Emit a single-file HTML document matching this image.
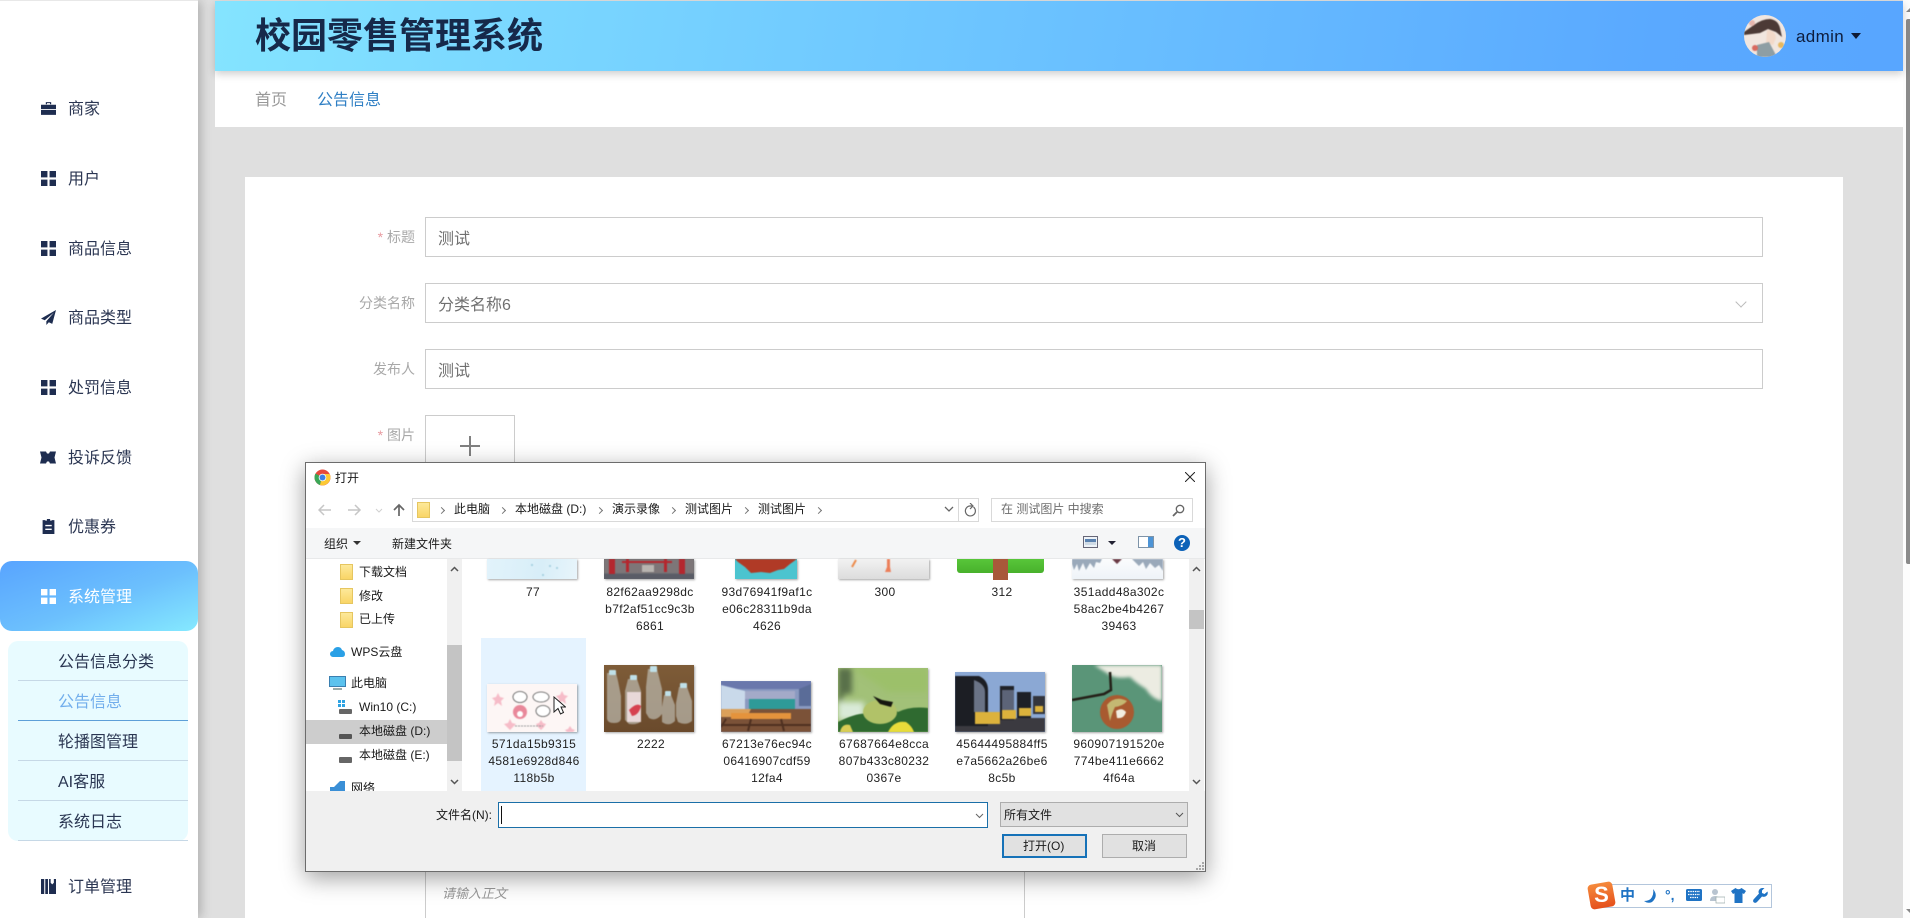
<!DOCTYPE html>
<html lang="zh"><head><meta charset="utf-8"><title>校园零售管理系统</title>
<style>
html,body{margin:0;padding:0;width:1910px;height:918px;overflow:hidden;background:#dfdfdf}
body{position:relative;font-family:"Liberation Sans","Noto Sans CJK SC",sans-serif}
div,span,svg{position:absolute;box-sizing:border-box}
.t{white-space:nowrap}
.m{left:68px;font-size:16px;line-height:24px;color:#2b3652}
.ic{left:40.500px;width:15px;height:15px}
.s{left:58px;font-size:16px;line-height:24px;color:#2a3652}
.sep{left:18px;width:170px;height:1px;background:#c6d8e6}
.lb{font-size:14px;line-height:20px;color:#a8a8a8;text-align:right;right:1495px}
.lb i{font-style:normal;color:#e89aa0}
.inp{left:425px;width:1338px;height:40px;background:#fff;border:1px solid #ccc}
.inp span{left:12px;top:11px;font-size:16px;line-height:22px;color:#707070;white-space:nowrap}
.d{font-size:12px;line-height:17px;color:#1a1a1a;white-space:nowrap}
.ch{width:5px;height:5px;border-top:1px solid #777;border-right:1px solid #777;transform:rotate(45deg);top:508px}
.f{text-align:center;font-size:12px;line-height:17px;color:#222;letter-spacing:.35px;width:112px;white-space:nowrap}
.th{overflow:hidden;box-shadow:1px 1px 2px rgba(0,0,0,.35)}
.th svg{left:0;top:0;filter:blur(.5px)}
.fold{width:13px;height:16px;background:linear-gradient(#fde99a,#f9d566);border:1px solid #e6c660}
</style></head><body>

<!-- sidebar -->
<div style="left:0;top:1px;width:198px;height:917px;background:#fff;box-shadow:3px 0 10px rgba(0,0,0,.22)"></div>
<div style="left:0;top:0;width:198px;height:1px;background:#e8e8e8"></div>

<svg class="ic" style="top:101px" viewBox="0 0 14 14" fill="#1e2d50"><path d="M4.500 3V1h5v2H8.400V2H5.600v1zM0 3.500h14v4H0zM0 8.300h14V13H0z"/></svg>
<div class="t m" style="top:98px">商家</div>
<svg class="ic" style="top:171px" viewBox="0 0 14 14" fill="#1e2d50"><path d="M0 0h6v6H0zM8 0h6v6H8zM0 8h6v6H0zM8 8h6v6H8z"/></svg>
<div class="t m" style="top:168px">用户</div>
<svg class="ic" style="top:241px" viewBox="0 0 14 14" fill="#1e2d50"><path d="M0 0h6v6H0zM8 0h6v6H8zM0 8h6v6H0zM8 8h6v6H8z"/></svg>
<div class="t m" style="top:238px">商品信息</div>
<svg class="ic" style="top:310px" viewBox="0 0 14 14" fill="#1e2d50"><path d="M14 0 0 8l3.500 1.600L12 2.500 5 10.500V14l2.300-2.600 3.200 1.500z"/></svg>
<div class="t m" style="top:307px">商品类型</div>
<svg class="ic" style="top:380px" viewBox="0 0 14 14" fill="#1e2d50"><path d="M0 0h6v6H0zM8 0h6v6H8zM0 8h6v6H0zM8 8h6v6H8z"/></svg>
<div class="t m" style="top:377px">处罚信息</div>
<svg class="ic" style="top:450px;left:40px;width:16px" viewBox="0 0 16 14" fill="#1e2d50"><path d="M0 1h6l1 2h2l1-2h6l-1.500 6L16 13h-6l-1-2H7l-1 2H0l1.500-6z"/></svg>
<div class="t m" style="top:447px">投诉反馈</div>
<svg class="ic" style="top:519px" viewBox="0 0 14 14" fill="#1e2d50"><path fill-rule="evenodd" d="M4 1.500h1.500V0h3v1.500H10V1h2.500v13h-11V1H4zM4 5.500v1.300h6V5.500zM4 9v1.300h6V9z"/></svg>
<div class="t m" style="top:516px">优惠券</div>

<div style="left:0;top:561px;width:198px;height:70px;border-radius:12px;background:linear-gradient(160deg,#58a4ff 0%,#6cc0fd 55%,#85e9ff 100%)"></div>
<svg class="ic" style="top:589px" viewBox="0 0 14 14" fill="#fff"><path d="M0 0h6v6H0zM8 0h6v6H8zM0 8h6v6H0zM8 8h6v6H8z"/></svg>
<div class="t m" style="top:586px;color:#fff">系统管理</div>

<div style="left:8px;top:641px;width:180px;height:200px;background:#e8fbff;border-radius:10px"></div>
<div class="t s" style="top:651px">公告信息分类</div>
<div class="sep" style="top:680px"></div>
<div class="t s" style="top:691px;color:#72aeec">公告信息</div>
<div class="sep" style="top:720px;background:#5d9fd8"></div>
<div class="t s" style="top:731px">轮播图管理</div>
<div class="sep" style="top:760px"></div>
<div class="t s" style="top:771px">AI客服</div>
<div class="sep" style="top:800px"></div>
<div class="t s" style="top:811px">系统日志</div>
<div class="sep" style="top:840px"></div>

<svg class="ic" style="top:879px" viewBox="0 0 14 14" fill="#1e2d50"><path d="M0 0h3v14H0zM4 0h2.500v14H4zM7.500 0H9v3.500L10.500 5 12 3.500V0h2v14H7.500z"/></svg>
<div class="t m" style="top:876px">订单管理</div>

<!-- header -->
<div style="left:215px;top:1px;width:1688px;height:70px;background:linear-gradient(100deg,#84e4ff 0%,#6fc8ff 40%,#5aa9ff 85%,#58a6ff 100%);box-shadow:0 3px 8px rgba(0,0,0,.2);z-index:2"></div>
<div class="t" style="left:255px;top:11px;font-size:36px;line-height:50px;font-weight:bold;color:#16294a;z-index:3">校园零售管理系统</div>
<div style="left:1744px;top:15px;width:42px;height:42px;border-radius:50%;overflow:hidden;background:#f1e6df;z-index:3">
<svg width="42" height="42" viewBox="0 0 42 42" style="filter:blur(.6px)"><path d="M0 17 10 10q8-6 16-6 8 1 10 9l2 9-6-5-8-3-8 4-16 2z" fill="#4c3a36"/><path d="M23 15q8 0 9 8l-3 7-7-2z" fill="#f2d9c9"/><path d="M13 30l12-3 8 15H13z" fill="#8e9ea4"/><circle cx="11" cy="33" r="3" fill="#d96a60"/><circle cx="37" cy="30" r="3" fill="#e7b85f"/><circle cx="8" cy="8" r="3" fill="#e6b6ae"/></svg></div>
<div class="t" style="left:1796px;top:25px;font-size:17px;letter-spacing:.35px;line-height:24px;color:#0e1d3d;z-index:3">admin</div>
<div style="left:1851px;top:33px;width:0;height:0;border-left:5px solid transparent;border-right:5px solid transparent;border-top:6px solid #0e1a35;z-index:3"></div>

<!-- sub nav -->
<div style="left:215px;top:71px;width:1688px;height:56px;background:#fff"></div>
<div class="t" style="left:255px;top:89px;font-size:16px;line-height:24px;color:#999">首页</div>
<div class="t" style="left:317px;top:89px;font-size:16px;line-height:24px;color:#2f7fc4">公告信息</div>

<!-- page scrollbar -->
<div style="left:1903px;top:0;width:7px;height:918px;background:#fdfdfd"></div>
<div style="left:1906px;top:19px;width:4px;height:545px;background:#8b8b8b;border-radius:2px 0 0 2px"></div>
<div style="left:1906px;top:8px;width:0;height:0;border-left:4px solid transparent;border-bottom:4px solid #888"></div>
<div style="left:1906px;top:909px;width:0;height:0;border-left:4px solid transparent;border-top:4px solid #888"></div>

<!-- card -->
<div style="left:245px;top:177px;width:1598px;height:741px;background:#fff"></div>
<div class="t lb" style="top:227px"><i>*</i> 标题</div>
<div class="inp" style="top:217px"><span>测试</span></div>
<div class="t lb" style="top:293px">分类名称</div>
<div class="inp" style="top:283px"><span>分类名称6</span></div>
<div style="left:1737px;top:298px;width:8px;height:8px;border-right:1px solid #bbb;border-bottom:1px solid #bbb;transform:rotate(45deg)"></div>
<div class="t lb" style="top:359px">发布人</div>
<div class="inp" style="top:349px"><span>测试</span></div>
<div class="t lb" style="top:425px"><i>*</i> 图片</div>
<div style="left:425px;top:415px;width:90px;height:90px;border:1px solid #ccc"></div>
<div style="left:460px;top:445px;width:20px;height:2px;background:#808080"></div>
<div style="left:469px;top:436px;width:2px;height:20px;background:#808080"></div>
<div style="left:425px;top:860px;width:600px;height:58px;border:1px solid #ccc;border-bottom:none"></div>
<div class="t" style="left:442px;top:884px;font-size:13px;line-height:20px;font-style:italic;color:#999">请输入正文</div>

<!-- sogou -->
<div style="left:1600px;top:884px;width:172px;height:24px;background:#fff;border:1px solid #b3c6dc"></div>
<div style="left:1589px;top:883px;width:25px;height:25px;border-radius:4px;background:linear-gradient(#f58a3c,#e5501c);transform:rotate(-10deg)"></div>
<div class="t" style="left:1591px;top:881px;width:21px;text-align:center;font-size:22px;line-height:28px;font-weight:bold;color:#fff">S</div>
<div class="t" style="left:1620px;top:886px;font-size:15px;line-height:20px;font-weight:bold;color:#1f73c4">中</div>
<svg style="left:1643px;top:888px" width="16" height="16" viewBox="0 0 16 16"><path d="M10 1q6 7-1 13-4 2-8-1 6 0 8-4 2-4 1-8z" fill="#1f73c4"/></svg>
<div class="t" style="left:1665px;top:885px;font-size:14px;line-height:20px;font-weight:bold;color:#1f73c4">°,</div>
<svg style="left:1686px;top:889px" width="16" height="13" viewBox="0 0 16 13"><rect width="16" height="12" rx="1.500" fill="#1f73c4"/><path d="M2 2.500h12M2 5.500h12M4 8.500h8" stroke="#fff" stroke-width="1.300" stroke-dasharray="1.500 .8"/></svg>
<svg style="left:1709px;top:888px" width="16" height="16" viewBox="0 0 16 16"><circle cx="6" cy="4" r="3" fill="#b8c4d0"/><path d="M1 13q0-5 5-5t5 5z" fill="#b8c4d0"/><rect x="7" y="9" width="9" height="6" fill="#fff" stroke="#9aa" stroke-width=".7"/></svg>
<svg style="left:1731px;top:888px" width="15" height="15" viewBox="0 0 15 15"><path d="M4.500 0 0 3l2 3 1.500-.7V15h8V5.300L13 6l2-3-4.500-3q-3 2.500-6 0z" fill="#1f73c4"/></svg>
<svg style="left:1753px;top:888px" width="15" height="15" viewBox="0 0 15 15"><path d="M14.500 3.500 11.500 6 9 5 9 2.500 11.500 0Q7.500-.5 6 2q-1 2 0 3.500L.5 11.500q-1 2 .5 3 1.500 1 3-.5L9 8.500q3 1 4.800-1 1.500-1.800.7-4z" fill="#1f73c4"/></svg>

<!-- dialog -->
<div style="left:305px;top:462px;width:901px;height:410px;background:#fff;border:1px solid #6c6c6c;box-shadow:0 6px 22px rgba(0,0,0,.38);z-index:5;overflow:hidden">
</div>
<div id="dlg" style="left:0;top:0;width:1910px;height:918px;z-index:6">
  <!-- title -->
  <svg style="left:314px;top:469px" width="17" height="17" viewBox="0 0 17 17"><circle cx="8.500" cy="8.500" r="8" fill="#e6493c"/><path d="M8.500 8.500 1.500 4.500A8 8 0 0 0 6 16z" fill="#3aa757"/><path d="M8.500 5h7.200A8 8 0 0 1 6 16z" fill="#fcc934"/><circle cx="8.500" cy="8.500" r="3.800" fill="#fff"/><circle cx="8.500" cy="8.500" r="3" fill="#3d7fe6"/></svg>
  <div class="t d" style="left:335px;top:470px">打开</div>
  <svg style="left:1185px;top:472px" width="10" height="10" viewBox="0 0 10 10"><path d="M0 0l10 10M10 0 0 10" stroke="#222" stroke-width="1"/></svg>

  <!-- nav -->
  <svg style="left:318px;top:503px" width="90" height="14" viewBox="0 0 90 14" fill="none"><path d="M1 7h12M6 2 1 7l5 5" stroke="#c6c6c6" stroke-width="1.500"/><path d="M30 7h12M37 2l5 5-5 5" stroke="#c6c6c6" stroke-width="1.500"/><path d="M58 6l3 3 3-3" stroke="#d0d0d0"/><path d="M81 13V2M76 7l5-5 5 5" stroke="#666" stroke-width="1.700"/></svg>
  <div style="left:412px;top:498px;width:567px;height:24px;border:1px solid #d9d9d9;background:#fff"></div>
  <div class="fold" style="left:417px;top:502px"></div>
  <div class="ch" style="left:439px"></div>
  <div class="t d" style="left:454px;top:501px">此电脑</div>
  <div class="ch" style="left:500px"></div>
  <div class="t d" style="left:515px;top:501px">本地磁盘 (D:)</div>
  <div class="ch" style="left:597px"></div>
  <div class="t d" style="left:612px;top:501px">演示录像</div>
  <div class="ch" style="left:670px"></div>
  <div class="t d" style="left:685px;top:501px">测试图片</div>
  <div class="ch" style="left:743px"></div>
  <div class="t d" style="left:758px;top:501px">测试图片</div>
  <div class="ch" style="left:816px"></div>
  <svg style="left:944px;top:506px" width="10" height="7" viewBox="0 0 10 7" fill="none"><path d="M1 1l4 4 4-4" stroke="#666" stroke-width="1.300"/></svg>
  <div style="left:958px;top:499px;width:1px;height:22px;background:#d9d9d9"></div>
  <svg style="left:963px;top:503px" width="13" height="14" viewBox="0 0 13 14" fill="none"><path d="M10.500 4A5 5 0 1 1 6.500 3H9" stroke="#666" stroke-width="1.200"/><path d="M7 0l3 3-3 3" stroke="#666" stroke-width="1.200"/></svg>
  <div style="left:991px;top:498px;width:202px;height:24px;border:1px solid #d9d9d9;background:#fff"></div>
  <div class="t d" style="left:1001px;top:501px;color:#6d6d6d">在 测试图片 中搜索</div>
  <svg style="left:1172px;top:504px" width="13" height="13" viewBox="0 0 13 13" fill="none"><circle cx="8" cy="5" r="3.700" stroke="#666" stroke-width="1.300"/><path d="M5 8 1 12" stroke="#666" stroke-width="1.800"/></svg>

  <!-- toolbar -->
  <div style="left:306px;top:528px;width:899px;height:31px;background:#f5f6f7;border-bottom:1px solid #e8e9ea"></div>
  <div class="t d" style="left:324px;top:536px">组织</div>
  <div style="left:353px;top:541px;width:0;height:0;border-left:4px solid transparent;border-right:4px solid transparent;border-top:4px solid #333"></div>
  <div class="t d" style="left:392px;top:536px">新建文件夹</div>
  <svg style="left:1083px;top:536px" width="16" height="13" viewBox="0 0 16 13"><rect x=".5" y=".5" width="14" height="11" fill="#eef3f8" stroke="#667"/><path d="M2 3h11v3H2z" fill="#5a82b0"/><path d="M2 6h11v3H2z" fill="#cfdbe6"/></svg>
  <div style="left:1108px;top:541px;width:0;height:0;border-left:4px solid transparent;border-right:4px solid transparent;border-top:4px solid #223"></div>
  <svg style="left:1138px;top:536px" width="16" height="13" viewBox="0 0 16 13"><rect x=".5" y=".5" width="15" height="11" fill="#fff" stroke="#7d93a8"/><rect x="10" y="1" width="5" height="10" fill="#4d94d6"/></svg>
  <div style="left:1174px;top:535px;width:16px;height:16px;border-radius:50%;background:#0c62b8;color:#fff;font-size:13px;line-height:16px;font-weight:bold;text-align:center">?</div>

  <!-- left pane -->
  <div class="fold" style="left:340px;top:564px"></div><div class="t d" style="left:359px;top:564px">下载文档</div>
  <div class="fold" style="left:340px;top:588px"></div><div class="t d" style="left:359px;top:588px">修改</div>
  <div class="fold" style="left:340px;top:612px"></div><div class="t d" style="left:359px;top:611px">已上传</div>
  <svg style="left:330px;top:646px" width="15" height="12" viewBox="0 0 15 12"><path d="M3 11a3 3 0 0 1 0-6q1-4 5-4 3 0 4 3 3 1 3 4t-3 3z" fill="#2aa0e6"/></svg>
  <div class="t d" style="left:351px;top:644px">WPS云盘</div>
  <svg style="left:329px;top:676px" width="17" height="15" viewBox="0 0 17 15"><rect x=".5" y=".5" width="16" height="10" fill="#5bc2ee" stroke="#3a7fb0"/><path d="M4 13h9" stroke="#9aa" stroke-width="2"/></svg>
  <div class="t d" style="left:351px;top:675px">此电脑</div>
  <svg style="left:337px;top:699px" width="16" height="16" viewBox="0 0 16 16"><path d="M1 1h3v3H1zM5 1h3v3H5zM1 5h3v3H1zM5 5h3v3H5z" fill="#2ea3e3"/><rect x="2" y="10" width="13" height="5" rx="1" fill="#666"/></svg>
  <div class="t d" style="left:359px;top:699px">Win10 (C:)</div>
  <div style="left:306px;top:720px;width:141px;height:24px;background:#cdcdcd"></div>
  <div style="left:339px;top:734px;width:13px;height:5px;border-radius:1px;background:#555"></div>
  <div class="t d" style="left:359px;top:723px">本地磁盘 (D:)</div>
  <div style="left:339px;top:757px;width:13px;height:6px;border-radius:1px;background:#666"></div>
  <div class="t d" style="left:359px;top:747px">本地磁盘 (E:)</div>
  <svg style="left:329px;top:780px" width="18" height="11" viewBox="0 0 18 11"><path d="M1 11V7h4l3-3 3-3h5v10z" fill="#3a8fd6"/></svg>
  <div class="t d" style="left:351px;top:780px;height:11px;overflow:hidden">网络</div>
  <div style="left:447px;top:559px;width:15px;height:232px;background:#f0f0f0"></div>
  <div style="left:447px;top:645px;width:15px;height:116px;background:#c4c4c4"></div>
  <svg style="left:450px;top:566px" width="9" height="6" viewBox="0 0 9 6" fill="none"><path d="M1 5l3.500-3.500L8 5" stroke="#555" stroke-width="1.500"/></svg>
  <svg style="left:450px;top:779px" width="9" height="6" viewBox="0 0 9 6" fill="none"><path d="M1 1l3.500 3.500L8 1" stroke="#555" stroke-width="1.500"/></svg>

  <!-- right list -->
  <div style="left:481px;top:638px;width:105px;height:153px;background:#e5f3ff"></div>

  <div class="th" style="left:487px;top:559px;width:90px;height:20px;background:linear-gradient(100deg,#e2f3fb,#d8eef8 60%,#e8f5fb)"><svg width="90" height="20"><g fill="#9ccbdc"><circle cx="45" cy="6" r="1"/><circle cx="63" cy="7" r="1"/><circle cx="70" cy="9" r="1"/><circle cx="56" cy="16" r="1"/></g></svg></div>
  <div class="th" style="left:604px;top:559px;width:90px;height:20px;background:#6a6d72"><svg width="90" height="20"><path d="M0 0h90v14H0z" fill="#7d7678"/><path d="M5 0h6v15H5zM75 0h6v15h-6zM22 0h3v13h-3zM60 0h3v13h-3zM18 2h50v2H18z" fill="#b4272e"/><path d="M0 15h90v5H0z" fill="#5a5c66"/><path d="M38 6h12v7H38z" fill="#b8b4b0"/></svg></div>
  <div class="th" style="left:735px;top:559px;width:62px;height:20px;background:#4cc4cf"><svg width="62" height="20"><path d="M0 0h62L55 5l-6 5-6 1-8 3-9-1-10 1L10 8 3 3z" fill="#b03a26"/></svg></div>
  <div class="th" style="left:838px;top:559px;width:91px;height:20px;background:linear-gradient(#f2f2f2,#dcdcdc)"><svg width="91" height="20"><path d="M18 1 14 8" stroke="#ec8a4a" stroke-width="2"/><path d="M49 0v8l-2 5h6l-1-5V0z" fill="#ec7f5a"/></svg></div>
  <div style="left:957px;top:559px;width:87px;height:14px;background:linear-gradient(#58c63a,#48b12c);border-radius:0 0 3px 3px"></div>
  <div style="left:993px;top:559px;width:15px;height:21px;background:#a8583a"></div>
  <div class="th" style="left:1072px;top:559px;width:91px;height:20px;background:linear-gradient(#fbfcfd,#eef3f8)"><svg width="91" height="20"><path d="M0 0h30L28 4l-4-1-2 6-4-5-4 7-3-7-4 8-2-7-3 6-2-6zM60 0h31v12l-4-6-4 3-5-5-4 6-3-7-4 4z" fill="#9aa9ba"/><path d="M40 0h10l-5 5z" fill="#6a3a45"/></svg></div>

  <div class="f" style="left:477px;top:584px">77</div>
  <div class="f" style="left:594px;top:584px">82f62aa9298dc</div>
  <div class="f" style="left:594px;top:601px">b7f2af51cc9c3b</div>
  <div class="f" style="left:594px;top:618px">6861</div>
  <div class="f" style="left:711px;top:584px">93d76941f9af1c</div>
  <div class="f" style="left:711px;top:601px">e06c28311b9da</div>
  <div class="f" style="left:711px;top:618px">4626</div>
  <div class="f" style="left:829px;top:584px">300</div>
  <div class="f" style="left:946px;top:584px">312</div>
  <div class="f" style="left:1063px;top:584px">351add48a302c</div>
  <div class="f" style="left:1063px;top:601px">58ac2be4b4267</div>
  <div class="f" style="left:1063px;top:618px">39463</div>

  <!-- row 2 thumbs -->
  <div class="th" style="left:487px;top:684px;width:90px;height:48px;background:#fdf6f5"><svg width="90" height="48"><g fill="#f6bcc8"><path d="M11 9l2 4 4 1-3 3 1 5-4-3-4 3 1-5-3-3 4-1z"/><path d="M75 7l2 4 4 1-3 3 1 5-4-3-4 3 1-5-3-3 4-1z"/><path d="M23 35l2 4 4 1-3 3-3 3-3-3-3-3 4-1z"/><path d="M83 42l2 3 3 1-2 2h-6l-2-2 3-1z"/><path d="M54 36l2 3 3 1-2 3-3 3-3-3-2-3 3-1z"/></g><g fill="#fff" stroke="#555" stroke-width=".8"><ellipse cx="33" cy="13" rx="7" ry="5.500"/><ellipse cx="54" cy="13" rx="8" ry="5"/><ellipse cx="56" cy="27" rx="7" ry="5.500"/></g><circle cx="33" cy="28" r="7" fill="#e9889a"/><circle cx="33" cy="30" r="3" fill="#fff"/><path d="M28 42h28" stroke="#999" stroke-width="1" stroke-dasharray="2 1"/></svg></div>

  <div class="th" style="left:604px;top:665px;width:90px;height:67px;background:linear-gradient(#7e5c38,#6a4a2c)"><svg width="90" height="67"><g fill="#b9b5a9" opacity=".75"><path d="M3 8h9l2 8 3 15v22q0 5-7 5T3 53z"/><path d="M24 14h9l4 12v30q-3 4-12 3l-4-4V26z"/><path d="M44 4h9l5 20v25q-6 8-13 4l-3-5V22z"/><path d="M60 30h7l4 10v16q-6 6-13 1V42z"/><path d="M75 22h8l5 14v20q-6 5-14 1l-2-6V38z"/></g><path d="M23 27h14v30H23z" fill="#e8d8d8"/><path d="M25 45q8-8 12-4-2 9-9 10z" fill="#d6414f"/><g fill="#bfe0e8"><rect x="5" y="5" width="7" height="5" rx="1"/><rect x="26" y="10" width="7" height="5" rx="1"/><rect x="46" y="1" width="7" height="6" rx="1"/><rect x="61" y="26" width="6" height="5" rx="1"/><rect x="76" y="18" width="7" height="5" rx="1"/></g></svg></div>

  <div class="th" style="left:721px;top:681px;width:90px;height:51px;background:#8a9ac0"><svg width="90" height="51"><path d="M0 0h90v8H0z" fill="#6a78ac"/><path d="M0 4l24 6v18H0z" fill="#c9d9ea"/><path d="M78 8l12-5v22H78z" fill="#5a6c98"/><path d="M28 18h46v13H28z" fill="#2e9a98"/><path d="M24 10h50v8H24z" fill="#a4aac8"/><path d="M0 28h90v23H0z" fill="#7b5238"/><path d="M0 28h30l-4 8H0z" fill="#dba05a"/><path d="M10 32h60v6H10z" fill="#e4933c"/><path d="M0 44h90M5 38l-5 8M30 38l-3 12M60 38l3 12" stroke="#4e3020" stroke-width="2"/></svg></div>

  <div class="th" style="left:838px;top:668px;width:90px;height:64px;background:#a2c178"><svg width="90" height="64"><defs><filter id="b"><feGaussianBlur stdDeviation="3"/></filter></defs><g filter="url(#b)"><path d="M0 0h14v26H6L0 44z" fill="#59704a"/><path d="M14 0h76v24H50z" fill="#9cc06a"/><path d="M0 34h26v18H0z" fill="#d9ead8"/></g><path d="M30 46q3-12 14-14l16 12q12-6 30-4v24H0V54q20-10 30-8z" fill="#2f6a30"/><ellipse cx="42" cy="44" rx="17" ry="12" fill="#b1c268"/><path d="M35 28l9 4 11 2-2 5-11-3z" fill="#15160f"/><path d="M50 64q6-12 18-10 6 4 8 10z" fill="#e8db3a"/><path d="M2 64q2-9 10-7l3 7z" fill="#d9cc55"/></svg></div>

  <div class="th" style="left:955px;top:672px;width:90px;height:60px;background:#8ba8d4"><svg width="90" height="60"><path d="M0 46h90v14H0z" fill="#3b3a40"/><path d="M0 4h24q9 4 9 14v36H0z" fill="#1c1e24"/><path d="M19 8q11 4 11 12v20H19z" fill="#6a7386"/><path d="M20 40h25v12H20z" fill="#dcb23c"/><path d="M45 14h14v34H45z" fill="#202228"/><path d="M47 18h12v20H47z" fill="#5c6478"/><path d="M47 38h14v9H47z" fill="#dcb23c"/><path d="M62 20h14v26H62z" fill="#1e2026"/><path d="M64 36h12v8H64z" fill="#dcb23c"/><path d="M78 24h12v18H78z" fill="#33353c"/><path d="M80 34h8v6h-8z" fill="#dcb23c"/></svg></div>

  <div class="th" style="left:1072px;top:665px;width:90px;height:67px;background:#5a9578"><svg width="90" height="67"><defs><filter id="c"><feGaussianBlur stdDeviation="1.500"/></filter></defs><g filter="url(#c)"><path d="M22 0h68v36q-10-2-16-12-10-6-16-12-14 2-20-2z" fill="#ecece2"/></g><path d="M0 35l32-6 7-4-1-18" fill="none" stroke="#242018" stroke-width="2.500"/><circle cx="45" cy="47" r="17" fill="#a85a30"/><path d="M35 40q8-10 20-4-4 5-12 6-3 6-5 14z" fill="#c4b872"/><path d="M44 46q6-4 10 1-2 7-9 6z" fill="#f2ede0"/></svg></div>

  <!-- cursor -->
  <svg style="left:553px;top:696px" width="13" height="20" viewBox="0 0 13 20"><path d="M1 1v15l4-3.500L7.500 18l3-1.500L8 11h4.500z" fill="#fff" stroke="#222" stroke-width="1"/></svg>

  <div class="f" style="left:478px;top:736px;color:#222">571da15b9315</div>
  <div class="f" style="left:478px;top:753px;color:#222">4581e6928d846</div>
  <div class="f" style="left:478px;top:770px;color:#222">118b5b</div>
  <div class="f" style="left:595px;top:736px">2222</div>
  <div class="f" style="left:711px;top:736px">67213e76ec94c</div>
  <div class="f" style="left:711px;top:753px">06416907cdf59</div>
  <div class="f" style="left:711px;top:770px">12fa4</div>
  <div class="f" style="left:828px;top:736px">67687664e8cca</div>
  <div class="f" style="left:828px;top:753px">807b433c80232</div>
  <div class="f" style="left:828px;top:770px">0367e</div>
  <div class="f" style="left:946px;top:736px">45644495884ff5</div>
  <div class="f" style="left:946px;top:753px">e7a5662a26be6</div>
  <div class="f" style="left:946px;top:770px">8c5b</div>
  <div class="f" style="left:1063px;top:736px">960907191520e</div>
  <div class="f" style="left:1063px;top:753px">774be411e6662</div>
  <div class="f" style="left:1063px;top:770px">4f64a</div>

  <div style="left:1189px;top:559px;width:15px;height:232px;background:#f0f0f0"></div>
  <div style="left:1189px;top:610px;width:15px;height:19px;background:#c4c4c4"></div>
  <svg style="left:1192px;top:566px" width="9" height="6" viewBox="0 0 9 6" fill="none"><path d="M1 5l3.500-3.500L8 5" stroke="#555" stroke-width="1.500"/></svg>
  <svg style="left:1192px;top:779px" width="9" height="6" viewBox="0 0 9 6" fill="none"><path d="M1 1l3.500 3.500L8 1" stroke="#555" stroke-width="1.500"/></svg>

  <!-- bottom -->
  <div style="left:306px;top:791px;width:899px;height:80px;background:#f0f0f0"></div>
  <div class="t d" style="left:436px;top:807px">文件名(N):</div>
  <div style="left:498px;top:802px;width:490px;height:26px;background:#fff;border:1px solid #1b6fa8"></div>
  <div style="left:501px;top:806px;width:1px;height:18px;background:#111"></div>
  <svg style="left:975px;top:813px" width="9" height="6" viewBox="0 0 9 6" fill="none"><path d="M1 1l3.500 3.500L8 1" stroke="#666"/></svg>
  <div style="left:1000px;top:802px;width:188px;height:25px;background:#e1e1e1;border:1px solid #adadad"></div>
  <div class="t d" style="left:1004px;top:807px">所有文件</div>
  <svg style="left:1175px;top:812px" width="9" height="6" viewBox="0 0 9 6" fill="none"><path d="M1 1l3.500 3.500L8 1" stroke="#555"/></svg>
  <div style="left:1002px;top:834px;width:85px;height:24px;background:#e1e1e1;border:2px solid #1672b8"></div>
  <div class="t d" style="left:1023px;top:838px">打开(O)</div>
  <div style="left:1102px;top:834px;width:85px;height:24px;background:#e1e1e1;border:1px solid #adadad"></div>
  <div class="t d" style="left:1132px;top:838px">取消</div>
  <svg style="left:1196px;top:862px" width="8" height="8" viewBox="0 0 8 8" fill="#a8a8a8"><path d="M6 0h2v2H6zM3 3h2v2H3zM6 3h2v2H6zM0 6h2v2H0zM3 6h2v2H3zM6 6h2v2H6z"/></svg>
</div>
</body></html>
